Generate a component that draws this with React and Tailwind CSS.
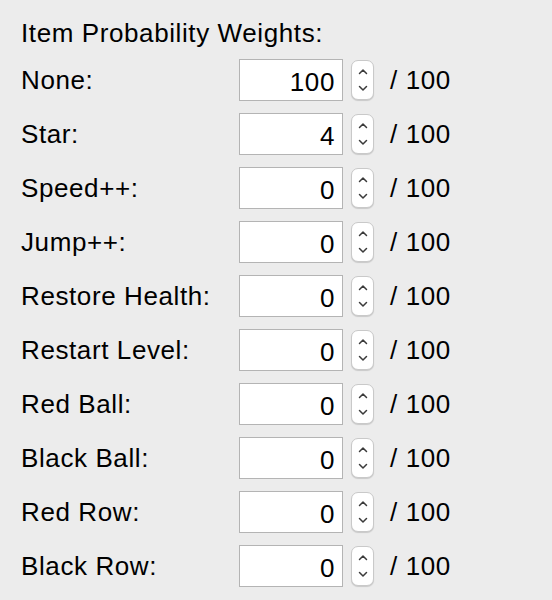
const rows = [
  { label: 'None:', value: 100 },
  { label: 'Star:', value: 4 },
  { label: 'Speed++:', value: 0 },
  { label: 'Jump++:', value: 0 },
  { label: 'Restore Health:', value: 0 },
  { label: 'Restart Level:', value: 0 },
  { label: 'Red Ball:', value: 0 },
  { label: 'Black Ball:', value: 0 },
  { label: 'Red Row:', value: 0 },
  { label: 'Black Row:', value: 0 },
];

const Stepper = () => (
  <div className="w-[23px] h-[40px] rounded-[7px] border border-[#c9c9c9] bg-white shadow-[0_1px_1px_rgba(0,0,0,0.15)] flex flex-col items-center justify-center gap-[10px]">
    <svg width="10" height="7" viewBox="0 0 10 7" fill="none">
      <path d="M1.5 5.5 L5 2 L8.5 5.5" stroke="#3a3a3a" strokeWidth="1.5" strokeLinecap="round" strokeLinejoin="round" />
    </svg>
    <svg width="10" height="7" viewBox="0 0 10 7" fill="none">
      <path d="M1.5 1.5 L5 5 L8.5 1.5" stroke="#3a3a3a" strokeWidth="1.5" strokeLinecap="round" strokeLinejoin="round" />
    </svg>
  </div>
);

const App = () => {
  return (
    <div
      className="min-h-[600px] w-[552px] bg-[#ececec] text-black pl-[21px] pt-[18px] tracking-[0.6px]"
      style={{ fontFamily: '"Liberation Sans", Arial, sans-serif' }}
    >
      <div className="text-[26px] leading-[30px] mb-[11px]">Item Probability Weights:</div>

      <div className="flex flex-col gap-[12px]">
        {rows.map((row) => (
          <div key={row.label} className="flex items-center h-[42px] text-[26px]">
            <div className="w-[218px] leading-[30px]">{row.label}</div>
            <div className="w-[104px] h-[42px] border border-[#b4b4b4] bg-white flex items-center justify-end pr-[7px] pt-[4px] leading-[30px]">
              {row.value}
            </div>
            <div className="ml-[8px]">
              <Stepper />
            </div>
            <div className="ml-[16px] leading-[30px]">/ 100</div>
          </div>
        ))}
      </div>
    </div>
  );
};

export default App;
